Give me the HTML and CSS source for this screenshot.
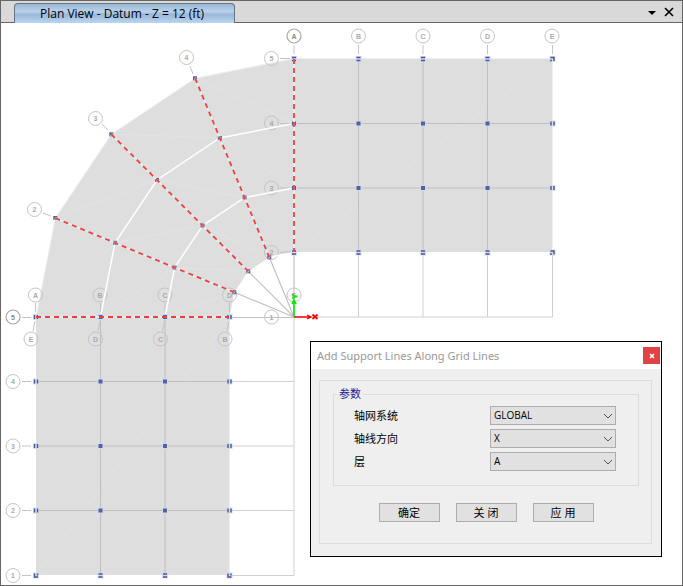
FILE: index.html
```html
<!DOCTYPE html>
<html lang="zh-CN">
<head>
    <meta charset="UTF-8">
    <meta name="viewport" content="width=device-width, initial-scale=1.0">
    <title>Plan View - Datum - Z = 12 (ft)</title>
    <link rel="stylesheet" href="styles.css">
</head>
<body>
    <div class="window">
        <header class="tab-bar">
            <button type="button" class="tab">Plan View - Datum - Z = 12 (ft)</button>
            <div class="tab-tools">
                <button type="button" class="tool" aria-label="Window list">
                    <svg width="10" height="10" viewBox="0 0 10 10"><path d="M1 4h8L5 8z"/></svg>
                </button>
                <button type="button" class="tool" aria-label="Close view">
                    <svg width="10" height="10" viewBox="0 0 10 10"><path class="cross" d="M1 1l8 8M9 1l-8 8"/></svg>
                </button>
            </div>
        </header>

        <main class="canvas">
            <svg class="plan" viewBox="1 23 681 562" preserveAspectRatio="xMinYMin meet">
                <defs>
                    <g id="node"><path class="halo" d="M-3-3h6v6h-6z"/><path class="mark" d="M-2-2h4v4h-4z"/></g>
                    <g id="node-h"><path class="halo" d="M-3-3h6v6h-6z"/><path class="bar" d="M-2-1.5h4M-2 1.5h4"/></g>
                    <g id="node-v"><path class="halo" d="M-3-3h6v6h-6z"/><path class="bar" d="M-1.5-2v4M1.5-2v4"/></g>
                    <g id="node-r"><path class="halo" d="M-3-3h6v6h-6z"/><path class="bar" d="M-2-1.5h3.5v3.5M-1.5.5v2"/></g>
                    <g id="node-l"><path class="halo" d="M-3-3h6v6h-6z"/><path class="bar" d="M-1.5-2v3.5h3.5M1.5-2v2"/></g>
                    <g id="node-s"><path class="mark" d="M-2-2h4v4h-4z"/><path class="slit" d="M-1 2L1-1"/></g>
                </defs>

                <!-- slabs -->
                <path class="slab" d="M294 58.5h258.5V252H294z"/>
                <path class="slab" d="M36 317h193.5v258H36z"/>
                <path class="slab" d="M36 317L55.3 218.1 111.3 134.3 195.1 78.3 294 58.5V252.5L269.3 257.3 248.3 271.3 234.3 292.3 229.5 317z"/>
                <path class="mesh" d="M294 252L552 59M36 575L229 317M195 78L294 123M111 134L220 138M55 218L157 180M36 317L115 243M220 138L294 188M157 180L245 198M115 243L202 226M100 317L175 268M245 198L294 252M202 226L269 257M175 268L248 271M165 317L234 292"/>

                <!-- grid lines -->
                <path class="grid" d="M294 123.5h258.5M294 188h258.5M358.5 59v193M423 59v193M487.5 59v193M36 381.5h193.5M36 446h193.5M36 510.5h193.5M100.5 317v258M165 317v258"/>
                <path class="grid-out" d="M358.5 252v65M423 252v65M487.5 252v65M552.5 252v65M294 317h258.5M294 317v258.5M229.5 381.5H294M229.5 446H294M229.5 510.5H294M229.5 575.5H294"/>
                <path class="ray" d="M294 252v65M229.5 317.5H294M234.3 292.3L294 317M248.3 271.3L294 317M269.3 257.3L294 317"/>
                <path class="edge" d="M36 317L55.3 218.1 111.3 134.3 195.1 78.3 294 58.5h258.5"/>

                <!-- grid bubbles -->
                <g class="bubbles">
                    <path d="M294 45v9M358.5 45v9M423 45v9M487.5 45v9M552.5 45v9M280 58.5h10M280 123.5h12M280 188h12M280 252.5l12-1M22 317.5h9M22 381.5h9M22 446h9M22 510.5h9M22 575.5h9M43 213l8 3M102 124l6 6M190 66l3 8M35.5 303v9M100.5 303v9M165 303v9M229.5 303v9M35 321l-2 10M100 321l-2 10M164.5 321l-2 10M229 321l-2 10"/>
                    <circle class="strong" cx="294" cy="36" r="7"/><circle cx="358.5" cy="36" r="7"/><circle cx="423" cy="36" r="7"/><circle cx="487.5" cy="36" r="7"/><circle cx="552" cy="36" r="7"/>
                    <circle cx="271.5" cy="58.5" r="7"/><circle cx="271.5" cy="123" r="7"/><circle cx="271.5" cy="188" r="7"/><circle cx="271.5" cy="252.5" r="7"/><circle cx="271.5" cy="317" r="7"/>
                    <circle class="strong" cx="13" cy="317" r="7"/><circle cx="13" cy="381.5" r="7"/><circle cx="13" cy="446" r="7"/><circle cx="13" cy="510.5" r="7"/><circle cx="13" cy="575.5" r="7"/>
                    <circle cx="34.5" cy="209.5" r="7"/><circle cx="95.5" cy="118.5" r="7"/><circle cx="186.5" cy="57.5" r="7"/>
                    <circle cx="35.5" cy="295" r="7"/><circle cx="100" cy="295" r="7"/><circle cx="165" cy="295" r="7"/><circle cx="229.5" cy="295" r="7"/><circle cx="294" cy="295" r="7"/>
                    <circle cx="31" cy="339" r="7"/><circle cx="95.5" cy="339" r="7"/><circle cx="160.5" cy="339" r="7"/><circle cx="225" cy="339" r="7"/>
                </g>
                <g class="tags">
                    <text class="dark" x="294" y="38.5">A</text><text x="358.5" y="38.5">B</text><text x="423" y="38.5">C</text><text x="487.5" y="38.5">D</text><text x="552" y="38.5">E</text>
                    <text x="271.5" y="61">5</text><text x="271.5" y="125.5">4</text><text x="271.5" y="190.5">3</text><text x="271.5" y="255">2</text><text x="271.5" y="319.5">1</text>
                    <text class="dark" x="13" y="319.5">5</text><text x="13" y="384">4</text><text x="13" y="448.5">3</text><text x="13" y="513">2</text><text x="13" y="578">1</text>
                    <text x="34.5" y="212">2</text><text x="95.5" y="121">3</text><text x="186.5" y="60">4</text>
                    <text x="35.5" y="297.5">A</text><text x="100" y="297.5">B</text><text x="165" y="297.5">C</text><text x="229.5" y="297.5">D</text><text x="294" y="297.5">E</text>
                    <text x="31" y="341.5">E</text><text x="95.5" y="341.5">D</text><text x="160.5" y="341.5">C</text><text x="225" y="341.5">B</text>
                </g>

                <!-- curved beams between the bays -->
                <path class="beam" d="M100.5 317L115 242.8 157 180 219.8 138 294 123.5M165 317L174.6 267.6 202.6 225.6 244.6 197.6 294 188M269.3 257.3L294 252.5"/>

                <!-- nodes -->
                <g class="nodes">
                    <use href="#node-h" x="294" y="59"/><use href="#node-h" x="358.5" y="59"/><use href="#node-h" x="423" y="59"/><use href="#node-h" x="487.5" y="59"/><use href="#node-r" x="552.5" y="59"/>
                    <use href="#node" x="294" y="123.5"/><use href="#node" x="358.5" y="123.5"/><use href="#node" x="423" y="123.5"/><use href="#node" x="487.5" y="123.5"/><use href="#node-v" x="552.5" y="123.5"/>
                    <use href="#node" x="294" y="188"/><use href="#node" x="358.5" y="188"/><use href="#node" x="423" y="188"/><use href="#node" x="487.5" y="188"/><use href="#node-v" x="552.5" y="188"/>
                    <use href="#node-h" x="294" y="252.5"/><use href="#node-h" x="358.5" y="252.5"/><use href="#node-h" x="423" y="252.5"/><use href="#node-h" x="487.5" y="252.5"/><use href="#node-r" x="552.5" y="252.5"/>
                    <use href="#node-v" x="36" y="317"/><use href="#node" x="100.5" y="317"/><use href="#node" x="165" y="317"/><use href="#node-v" x="229.5" y="317"/>
                    <use href="#node-v" x="36" y="381.5"/><use href="#node" x="100.5" y="381.5"/><use href="#node" x="165" y="381.5"/><use href="#node-v" x="229.5" y="381.5"/>
                    <use href="#node-v" x="36" y="446"/><use href="#node" x="100.5" y="446"/><use href="#node" x="165" y="446"/><use href="#node-v" x="229.5" y="446"/>
                    <use href="#node-v" x="36" y="510.5"/><use href="#node" x="100.5" y="510.5"/><use href="#node" x="165" y="510.5"/><use href="#node-v" x="229.5" y="510.5"/>
                    <use href="#node-l" x="36" y="575.5"/><use href="#node-h" x="100.5" y="575.5"/><use href="#node-h" x="165" y="575.5"/><use href="#node-l" x="229.5" y="575.5"/>
                    <use href="#node-s" x="55.3" y="218"/><use href="#node-s" x="115" y="242.8"/><use href="#node-s" x="174.6" y="267.6"/><use href="#node-s" x="234.3" y="292.3"/>
                    <use href="#node-s" x="111.3" y="134.3"/><use href="#node-s" x="157" y="180"/><use href="#node-s" x="202.6" y="225.6"/><use href="#node-s" x="248.3" y="271.3"/>
                    <use href="#node-s" x="195" y="78.3"/><use href="#node-s" x="219.8" y="138"/><use href="#node-s" x="244.6" y="197.6"/><use href="#node-s" x="269.3" y="257.3"/>
                </g>

                <!-- support lines -->
                <path class="support-back" d="M294 59v193M195.1 78.3L269.3 257.3M111.3 134.3L248.3 271.3M55.3 218.1L234.3 292.3M36 317h193"/>
                <path class="support" d="M294 59v193M195.1 78.3L269.3 257.3M111.3 134.3L248.3 271.3M55.3 218.1L234.3 292.3M36 317h193"/>

                <!-- axes -->
                <path class="axis-x" d="M294 317h17M307 315l4 2-4 2"/>
                <path class="axis-y" d="M294 317v-16M292 304l2-4 2 4"/>
                <path class="axis-x bold" d="M312.5 314.5l5 4.500M317.5 314.5l-5 4.500"/>
                <path class="axis-y bold" d="M292.500 294l2 2.500h3M294.500 296.500l-2 2.500"/>
            </svg>

            <section class="dialog" role="dialog" aria-labelledby="dialog-title">
                <div class="dialog-head">
                    <h1 id="dialog-title">Add Support Lines Along Grid Lines</h1>
                    <button type="button" class="dialog-close" aria-label="Close">
                        <svg width="6" height="6" viewBox="0 0 6 6"><path d="M1 1l4 4M5 1L1 5"/></svg>
                    </button>
                </div>
                <form class="panel">
                    <fieldset>
                        <legend>参数</legend>
                        <div class="field">
                            <label for="system">轴网系统</label>
                            <div class="select">
                                <select id="system"><option>GLOBAL</option></select>
                                <svg width="10" height="6" viewBox="0 0 10 6"><path d="M1 1l4 4 4-4"/></svg>
                            </div>
                        </div>
                        <div class="field">
                            <label for="direction">轴线方向</label>
                            <div class="select">
                                <select id="direction"><option>X</option></select>
                                <svg width="10" height="6" viewBox="0 0 10 6"><path d="M1 1l4 4 4-4"/></svg>
                            </div>
                        </div>
                        <div class="field">
                            <label for="layer">层</label>
                            <div class="select">
                                <select id="layer"><option>A</option></select>
                                <svg width="10" height="6" viewBox="0 0 10 6"><path d="M1 1l4 4 4-4"/></svg>
                            </div>
                        </div>
                    </fieldset>
                    <div class="actions">
                        <button type="button">确定</button>
                        <button type="button">关 闭</button>
                        <button type="button">应 用</button>
                    </div>
                </form>
            </section>
        </main>
    </div>
</body>
</html>
```

FILE: styles.css
```css
* { box-sizing: border-box; }
body { margin: 0; background: #fff; font-family: "Open Sans", "Noto Sans CJK SC", sans-serif; font-size: 12px; color: #000; }
button, select { font: inherit; color: inherit; }

.window { display: flex; flex-direction: column; min-height: 100vh; border: 1px solid #666; }

/* tab bar */
.tab-bar { display: flex; align-items: flex-end; justify-content: space-between; height: 22px; padding: 0 8px 0 13px; background: #d9d9d9; border-bottom: 1px solid #666; }
.tab { height: 20px; margin-bottom: -1px; padding: 0 30px 0 25px; border: 1px solid #6b7580; border-bottom: 0; border-radius: 4px 4px 0 0; background: linear-gradient(#9ab7d5, #b9d2ec 40%, #9ab8d8 55%, #b9d5f0); line-height: 18px; white-space: nowrap; }
.tab-tools { display: flex; align-self: center; gap: 7px; }
.tool { display: flex; padding: 0; border: 0; background: none; }
.cross { fill: none; stroke: #000; stroke-width: 1.6; }

/* plan drawing */
.canvas { position: relative; display: flex; flex: 1; }
.plan { display: block; width: 100%; }
.slab { fill: #dedede; }
.mesh { fill: none; stroke: #e3e3e3; stroke-width: 0.8; }
.grid { fill: none; stroke: #bebebe; }
.grid-out { fill: none; stroke: #d0d0d0; }
.ray { fill: none; stroke: #c2c2c2; stroke-width: 1.2; }
.edge { fill: none; stroke: #f0f0f0; }
.beam { fill: none; stroke: #fff; stroke-width: 1.5; }
.bubbles { fill: none; stroke: #c4c4c4; }
.bubbles .strong { stroke: #a8a8a8; stroke-width: 1.2; }
.tags { fill: #aaa; font-family: "Liberation Sans", sans-serif; font-size: 7px; font-weight: bold; text-anchor: middle; }
.tags .dark { fill: #888; }
.halo { fill: #d6dbea; }
.mark { fill: #5161a3; }
.bar { fill: none; stroke: #4656a0; stroke-width: 1.4; }
.slit { fill: none; stroke: #cdd3ea; }
.support-back { fill: none; stroke: #d5f4f4; stroke-width: 1.8; }
.support { fill: none; stroke: #f83c3c; stroke-width: 1.8; stroke-dasharray: 5 4; }
.axis-x { fill: none; stroke: #f00; stroke-width: 1.3; }
.axis-y { fill: none; stroke: #0e0; stroke-width: 1.6; }
.bold { stroke-width: 1.8; }

/* dialog floats over the plan */
.dialog { position: absolute; right: 20px; bottom: 28px; width: 352px; border: 1px solid #000; background: #efefef; }
.dialog-head { display: flex; align-items: center; justify-content: space-between; height: 27px; padding: 0 1px 0 6px; background: #fff; }
.dialog-head h1 { margin: 0; font-family: "Noto Sans", sans-serif; font-size: 11px; font-weight: normal; color: #999; }
.dialog-close { display: flex; align-items: center; justify-content: center; width: 17px; height: 17px; padding: 0; border: 0; background: #e04343; }
.dialog-close path { fill: none; stroke: #fff; stroke-width: 1.6; }
.panel { margin: 11px 9px 12px 8px; padding: 6px 12px 21px 13px; border: 1px solid #dcdcdc; }
fieldset { margin: 0; padding: 5px 22px 14px 20px; border: 1px solid #dcdcdc; }
legend { margin-left: -17px; padding: 0 2px; font-size: 11px; line-height: 14px; color: #1a1a9c; }
.field { display: flex; align-items: center; justify-content: space-between; margin-bottom: 4px; font-size: 11px; line-height: 19px; }
.field:last-child { margin-bottom: 0; }
.select { display: grid; align-items: center; width: 126px; }
.select select { grid-area: 1 / 1; width: 100%; height: 19px; padding: 0 3px; border: 1px solid #adadad; border-radius: 0; background: #e1e1e1; font-size: 10px; line-height: 17px; appearance: none; }
.select svg { grid-area: 1 / 1; justify-self: end; margin-right: 3px; fill: none; stroke: #555; pointer-events: none; }
.actions { display: flex; justify-content: center; gap: 16px; margin-top: 17px; }
.actions button { width: 61px; height: 19px; padding: 0; border: 1px solid #adadad; background: #e1e1e1; font-size: 11px; line-height: 17px; }
```
